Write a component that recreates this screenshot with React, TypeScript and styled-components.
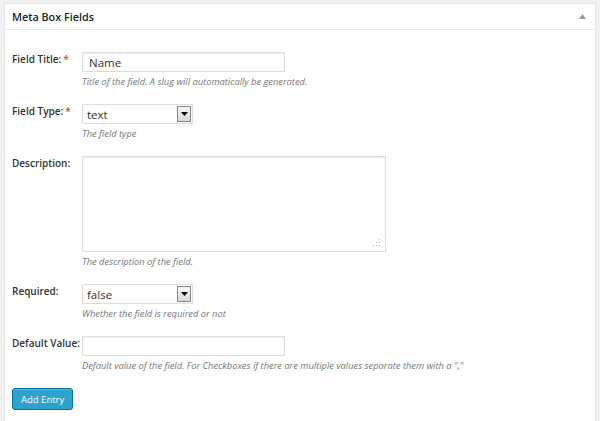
import React from "react"
import styled, { createGlobalStyle } from "styled-components"

const GlobalStyle = createGlobalStyle`
  html, body {
    margin: 0;
    padding: 0;
    background: #f1f1f1;
    font-family: "Open Sans", "Noto Sans", sans-serif;
    color: #444;
  }
`

interface IField {
  label: string
  required?: boolean
  hint: string
  children: React.ReactNode
}

const Field: React.FC<IField> = ({ label, required, hint, children }) => (
  <Row>
    <Label>
      {label}
      {required && <Star>*</Star>}
    </Label>
    <Control>
      {children}
      <Hint>{hint}</Hint>
    </Control>
  </Row>
)

const Dropdown: React.FC<{ value: string; options: string[] }> = ({
  value,
  options
}) => (
  <SelectWrap>
    <Select defaultValue={value}>
      {options.map((o) => (
        <option key={o} value={o}>
          {o}
        </option>
      ))}
    </Select>
    <SelectArrow>
      <svg width="7" height="4" viewBox="0 0 7 4">
        <path d="M0 0h7L3.5 4z" fill="#000" />
      </svg>
    </SelectArrow>
  </SelectWrap>
)

export default function App() {
  return (
    <>
      <GlobalStyle />
      <Page>
        <Postbox>
          <Header>
            <HeaderTitle>Meta Box Fields</HeaderTitle>
            <Toggle>
              <svg width="7" height="5" viewBox="0 0 7 5">
                <path d="M3.5 0L7 5H0z" fill="#999" />
              </svg>
            </Toggle>
          </Header>
          <Body>
            <Field
              label="Field Title:"
              required
              hint="Title of the field. A slug will automatically be generated."
            >
              <TextInput defaultValue="Name" />
            </Field>
            <Field label="Field Type:" required hint="The field type">
              <Dropdown value="text" options={["text", "textarea", "select", "checkbox"]} />
            </Field>
            <Field label="Description:" hint="The description of the field.">
              <TextArea />
            </Field>
            <Field label="Required:" hint="Whether the field is required or not">
              <Dropdown value="false" options={["false", "true"]} />
            </Field>
            <Field
              label="Default Value:"
              hint={
                'Default value of the field. For Checkboxes if there are multiple values separate them with a ","'
              }
            >
              <TextInput />
            </Field>
            <ButtonRow>
              <PrimaryButton type="button">Add Entry</PrimaryButton>
            </ButtonRow>
          </Body>
        </Postbox>
      </Page>
    </>
  )
}

const Page = styled.div`
  padding: 3px 4px 0 4px;
  height: 418px;
  display: flex;
`

const Postbox = styled.div`
  flex: 1;
  background: #fff;
  border: 1px solid #e5e5e5;
  border-bottom: none;
  box-shadow: 0 1px 1px rgba(0, 0, 0, 0.04);
  display: flex;
  flex-direction: column;
`

const Header = styled.div`
  height: 25px;
  display: flex;
  align-items: center;
  justify-content: space-between;
  padding: 0 9px 0 7px;
  border-bottom: 1px solid #eee;
`

const HeaderTitle = styled.h3`
  margin: 0;
  font-size: 10.8px;
  font-weight: 600;
  color: #222;
`

const Toggle = styled.div`
  display: flex;
  align-items: center;
`

const Body = styled.div`
  padding: 22px 8px 0 7px;
  display: flex;
  flex-direction: column;
  gap: 15px;
`

const Row = styled.div`
  display: flex;
  align-items: flex-start;
`

const Label = styled.div`
  width: 70px;
  flex: none;
  font-size: 10px;
  font-weight: 600;
  color: #333;
  line-height: 14px;
`

const Star = styled.span`
  color: #d54e21;
  margin-left: 2px;
`

const Control = styled.div`
  display: flex;
  flex-direction: column;
  align-items: flex-start;
  gap: 3px;
`

const Hint = styled.div`
  font-size: 9.3px;
  font-style: italic;
  color: #777;
  line-height: 14px;
`

const TextInput = styled.input`
  box-sizing: border-box;
  width: 203px;
  height: 20px;
  margin: 0;
  border: 1px solid #ddd;
  box-shadow: inset 0 1px 2px rgba(0, 0, 0, 0.07);
  padding: 0 6px;
  font-family: inherit;
  font-size: 11.5px;
  color: #333;
  outline: none;
  display: block;
`

const TextArea = styled.textarea`
  box-sizing: border-box;
  width: 304px;
  height: 96px;
  border: 1px solid #ddd;
  box-shadow: inset 0 1px 2px rgba(0, 0, 0, 0.07);
  resize: both;
  margin: 0;
  outline: none;
  display: block;

  &::-webkit-resizer {
    background:
      radial-gradient(circle, #bbb 0.8px, transparent 1px) 8px 2px / 3px 3px no-repeat,
      radial-gradient(circle, #bbb 0.8px, transparent 1px) 5px 5px / 3px 3px no-repeat,
      radial-gradient(circle, #bbb 0.8px, transparent 1px) 8px 5px / 3px 3px no-repeat,
      radial-gradient(circle, #bbb 0.8px, transparent 1px) 2px 8px / 3px 3px no-repeat,
      radial-gradient(circle, #bbb 0.8px, transparent 1px) 5px 8px / 3px 3px no-repeat,
      radial-gradient(circle, #bbb 0.8px, transparent 1px) 8px 8px / 3px 3px no-repeat,
      #fff;
  }
`

const SelectWrap = styled.div`
  position: relative;
  width: 111px;
  height: 20px;
`

const Select = styled.select`
  appearance: none;
  box-sizing: border-box;
  display: block;
  margin: 0;
  width: 100%;
  height: 100%;
  border: 1px solid #ddd;
  background: #fff;
  padding: 0 4px;
  font-family: inherit;
  font-size: 11.5px;
  color: #333;
  outline: none;
`

const SelectArrow = styled.span`
  position: absolute;
  top: 2px;
  right: 2px;
  width: 14px;
  height: 16px;
  box-sizing: border-box;
  border: 1px solid #888;
  background: linear-gradient(#f6f6f6, #d8d8d8);
  display: flex;
  align-items: center;
  justify-content: center;
  pointer-events: none;
`

const ButtonRow = styled.div``

const PrimaryButton = styled.button`
  height: 22px;
  padding: 0 8px;
  margin: 0;
  background: #2ea2cc;
  border: 1px solid #0074a2;
  border-radius: 3px;
  box-shadow: inset 0 1px 0 rgba(120, 200, 230, 0.5);
  color: #fff;
  font-family: inherit;
  font-size: 9.5px;
  cursor: pointer;
  display: block;
`
